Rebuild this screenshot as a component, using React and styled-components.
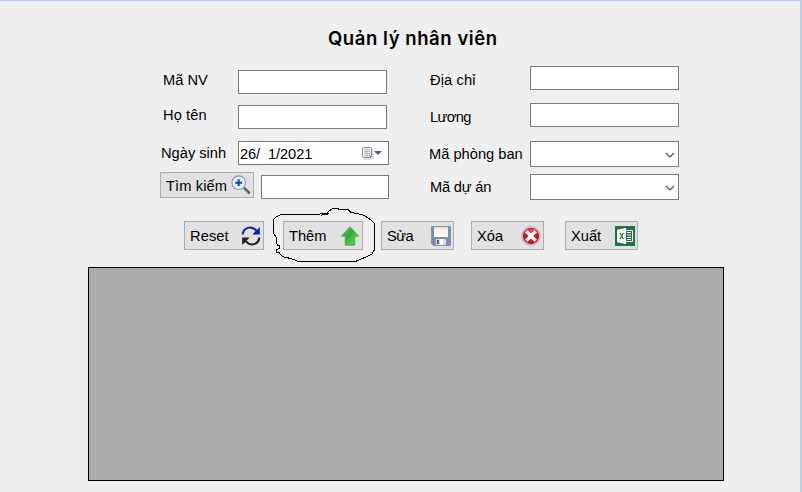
import React from 'react';
import styled, { createGlobalStyle } from 'styled-components';

const GlobalStyle = createGlobalStyle`
  *, *::before, *::after { box-sizing: border-box; }
  body { margin: 0; overflow: hidden; background: #efefef; }
`;

const Window = styled.main`
  width: 802px;
  height: 492px;
  border-top: 1px solid #b4cff0;
  border-right: 2px solid #b9d1ec;
  background: #efefef;
  color: #000;
  font: 14.67px/17px "Liberation Sans", Arial, sans-serif;
  overflow: hidden;
`;

const Title = styled.h1`
  margin: 24px 0 1px 328px;
  height: 26px;
  font: 600 18.5px/26px Inter, "Liberation Sans", sans-serif;
  letter-spacing: 0.57px;
  white-space: nowrap;
`;

const Form = styled.form`
  display: flex;
  height: 149px;
`;

const Column = styled.div`
  display: flex;
  flex-direction: column;
  width: ${(p) => p.$width}px;
  padding-top: ${(p) => p.$top}px;
  margin-left: ${(p) => p.$left}px;
`;

const Row = styled.div`
  display: flex;
  align-items: flex-start;
  margin-bottom: ${(p) => p.$gap || 0}px;
`;

const Label = styled.label`
  flex: none;
  width: ${(p) => p.$width}px;
  padding-left: ${(p) => p.$indent || 0}px;
  padding-top: ${(p) => p.$top}px;
  height: 24px;
  white-space: nowrap;
  letter-spacing: ${(p) => p.$spacing || 0}px;
`;

const TextBox = styled.input`
  width: ${(p) => p.$width || 149}px;
  height: 24px;
  margin: ${(p) => p.$top || 0}px 0 0 ${(p) => p.$left || 0}px;
  padding: 0 3px;
  border: 1px solid #7a7a7a;
  border-radius: 0;
  background: #fff;
  font: inherit;
  outline: none;
`;

const DateBox = styled.div`
  display: flex;
  align-items: center;
  width: 151px;
  height: 24px;
  padding: 2px 5px 0 1px;
  border: 1px solid #7a7a7a;
  background: #fff;
  white-space: pre;
  letter-spacing: -0.1px;

  svg { margin: -2px 0 0 auto; }
`;

const ComboBox = styled.div`
  display: flex;
  align-items: center;
  justify-content: flex-end;
  width: 149px;
  height: 26px;
  padding: 2px 3px 0 0;
  border: 1px solid #7a7a7a;
  background: #fff;
`;

const Button = styled.button`
  position: relative;
  display: flex;
  flex: none;
  align-items: center;
  justify-content: space-between;
  width: ${(p) => p.$width}px;
  height: ${(p) => p.$height || 29}px;
  margin: 0 0 0 ${(p) => p.$left || 0}px;
  padding: 0 2px 0 5px;
  border: 1px solid #adadad;
  border-radius: 0;
  background: #e1e1e1;
  color: #000;
  font: inherit;
  letter-spacing: ${(p) => p.$spacing || 0}px;
  white-space: nowrap;

  svg { flex: none; }
`;

const Caption = styled.span`
  padding-top: 2px;
`;

const Toolbar = styled.div`
  display: flex;
  padding-left: 184px;
  margin-top: 20px;
`;

const Scribble = styled.svg`
  position: absolute;
  left: -19px;
  top: -22px;
  pointer-events: none;
`;

const DataGrid = styled.section`
  width: 636px;
  height: 214px;
  margin: 17px 0 0 88px;
  border: 1px solid #000;
  background: #ababab;
`;

const CalendarIcon = () => (
  <svg width="22" height="14" viewBox="0 0 22 14">
    <path d="M2 13h9l1-1V3" fill="none" stroke="#c9bfbd" />
    <rect x="1.5" y="1.5" width="9" height="10" rx="1" fill="#f3f4f5" stroke="#958783" />
    <path d="M3 3.5h6M3 5.5h6M3 7.5h6M3 9.5h6M4.5 3v8M6.5 3v8M8.5 3v7" stroke="#aab4bf" strokeWidth=".7" />
    <path d="M9 12v-2h2z" fill="#776765" />
    <path d="M13 5h8l-4 4z" fill="#47618b" />
  </svg>
);

const ChevronIcon = () => (
  <svg width="10" height="8" viewBox="0 0 10 8">
    <path d="M1 2l4 4 4-4" fill="none" stroke="#555" strokeWidth="1.2" />
  </svg>
);

const SearchIcon = () => (
  <svg width="20" height="20" viewBox="0 0 20 20">
    <path d="M13 13l5.5 5.5" stroke="#555a60" strokeWidth="3" />
    <path d="M12 13.5l5 5" stroke="#c7ccd0" strokeWidth="1" />
    <circle cx="7.7" cy="7.7" r="6.7" fill="#d8edff" stroke="#8999ab" strokeWidth="1.3" />
    <circle cx="7.7" cy="7.7" r="5.5" fill="none" stroke="#f7fcff" strokeWidth="1" />
    <path d="M7.7 4.3v6.8M4.3 7.7h6.8" stroke="#1644c4" strokeWidth="2" />
  </svg>
);

const RefreshIcon = () => (
  <svg width="20" height="20" viewBox="0 0 20 20">
    <path d="M1.6 8.5C2.6 1.2 10.5-.7 15.5 4.8" fill="none" stroke="#101ca7" strokeWidth="2" />
    <path d="M18.8 1v7.5h-7.5z" fill="#101ca7" />
    <path d="M18.4 11.5C17.4 18.8 9.5 20.7 4.5 15.2" fill="none" stroke="#281b18" strokeWidth="2" />
    <path d="M1.2 19v-7.5h7.5z" fill="#281b18" />
  </svg>
);

const UpIcon = () => (
  <svg width="20" height="20" viewBox="0 0 20 20">
    <defs>
      <linearGradient id="upFill" x1="0" y1="0" x2="1" y2="1">
        <stop offset="0" stopColor="#6bc968" />
        <stop offset=".45" stopColor="#2fa936" />
        <stop offset=".75" stopColor="#4bd34d" />
        <stop offset="1" stopColor="#209b2c" />
      </linearGradient>
    </defs>
    <path d="M10 .7l8.8 9.5h-4v9H5.2v-9h-4z" fill="url(#upFill)" stroke="#4da854" strokeWidth=".8" />
  </svg>
);

const SaveIcon = () => (
  <svg width="20" height="20" viewBox="0 0 20 20">
    <path d="M.5.5h19v19H2.5l-2-2z" fill="#7890ad" stroke="#8296ae" />
    <path d="M3 1h14v10H3z" fill="#f9f3ed" />
    <path d="M3 1h14v2H3z" fill="#f8dfca" />
    <path d="M3 8h14v3H3z" fill="#fff" />
    <path d="M5 13h10v6H5z" fill="#d7dce2" />
    <path d="M6 14h2v4H6z" fill="#4f6279" />
    <path d="M9 13h3v6H9z" fill="#fff" />
  </svg>
);

const DeleteIcon = () => (
  <svg width="20" height="20" viewBox="0 0 20 20">
    <circle cx="10" cy="10" r="9.3" fill="#ddd" stroke="#a8a8a8" strokeWidth=".9" />
    <circle cx="10" cy="10" r="8.2" fill="#c91420" />
    <path d="M3 7a7.5 7.5 0 0 1 14 0q-7 3-14 0" fill="#d8434b" />
    <path d="M5.3 5.3l9.4 9.4M14.7 5.3l-9.4 9.4" stroke="#fff" strokeWidth="3.4" />
  </svg>
);

const ExcelIcon = () => (
  <svg width="20" height="20" viewBox="0 0 20 20">
    <path d="M0 0h20v20H0z" fill="#217346" />
    <path d="M11 4.5h6.5v11H11" fill="none" stroke="#fff" />
    <path d="M12 6.5h4M12 9h4M12 11.5h4M12 13.5h4" stroke="#fff" strokeWidth="1" />
    <path d="M2 3.7l9-1.7v16l-9-1.7z" fill="#fff" />
    <path d="M5 7l3.5 6M8.5 7L5 13" stroke="#217346" strokeWidth="1.2" />
  </svg>
);

const HandDrawnLoop = () => (
  <Scribble width="120" height="70" viewBox="0 0 360 210" shapeRendering="crispEdges">
    <path
      d="M168 46l17-4 5-2-2-3 12-10 15-3 7 4 28 2 8 7 37 8 20 13 13 12v80l-8 13-20 9-28 12H100l-25-9-23-5-10-12-8-1v-7l9-5v-8h-6l-4-25-8-14V58l10-8 15-7h110l18-3 12 3"
      fill="none"
      stroke="#000"
      strokeWidth="3"
    />
  </Scribble>
);

export default function App() {
  return (
    <>
      <GlobalStyle />
      <Window>
        <Title>Quản lý nhân viên</Title>
        <Form onSubmit={(e) => e.preventDefault()}>
          <Column $left={160} $width={229} $top={18}>
            <Row $gap={11}>
              <Label $width={78} $indent={3} $top={2}>Mã NV</Label>
              <TextBox />
            </Row>
            <Row $gap={12}>
              <Label $width={78} $indent={3} $top={2} $spacing={0.1}>Họ tên</Label>
              <TextBox />
            </Row>
            <Row $gap={7}>
              <Label $width={78} $indent={1} $top={4}>Ngày sinh</Label>
              <DateBox>26/  1/2021<CalendarIcon /></DateBox>
            </Row>
            <Row>
              <Button type="button" $width={94} $height={26} $spacing={0.1}>
                <Caption>Tìm kiếm</Caption><SearchIcon />
              </Button>
              <TextBox $width={128} $left={7} $top={3} />
            </Row>
          </Column>
          <Column $left={40} $width={250} $top={14}>
            <Row $gap={13}>
              <Label $width={101} $indent={1} $top={6} $spacing={0.1}>Địa chỉ</Label>
              <TextBox />
            </Row>
            <Row $gap={14}>
              <Label $width={101} $indent={1} $top={6} $spacing={-0.6}>Lương</Label>
              <TextBox />
            </Row>
            <Row $gap={7}>
              <Label $width={101} $top={5}>Mã phòng ban</Label>
              <ComboBox><ChevronIcon /></ComboBox>
            </Row>
            <Row>
              <Label $width={101} $indent={1} $top={5} $spacing={-0.2}>Mã dự án</Label>
              <ComboBox><ChevronIcon /></ComboBox>
            </Row>
          </Column>
        </Form>
        <Toolbar>
          <Button $width={80} $spacing={0.1}><Caption>Reset</Caption><RefreshIcon /></Button>
          <Button $width={80} $left={19}><Caption>Thêm</Caption><UpIcon /><HandDrawnLoop /></Button>
          <Button $width={73} $left={18} $spacing={-0.6}><Caption>Sửa</Caption><SaveIcon /></Button>
          <Button $width={73} $left={17}><Caption>Xóa</Caption><DeleteIcon /></Button>
          <Button $width={73} $left={21}><Caption>Xuất</Caption><ExcelIcon /></Button>
        </Toolbar>
        <DataGrid />
      </Window>
    </>
  );
}
